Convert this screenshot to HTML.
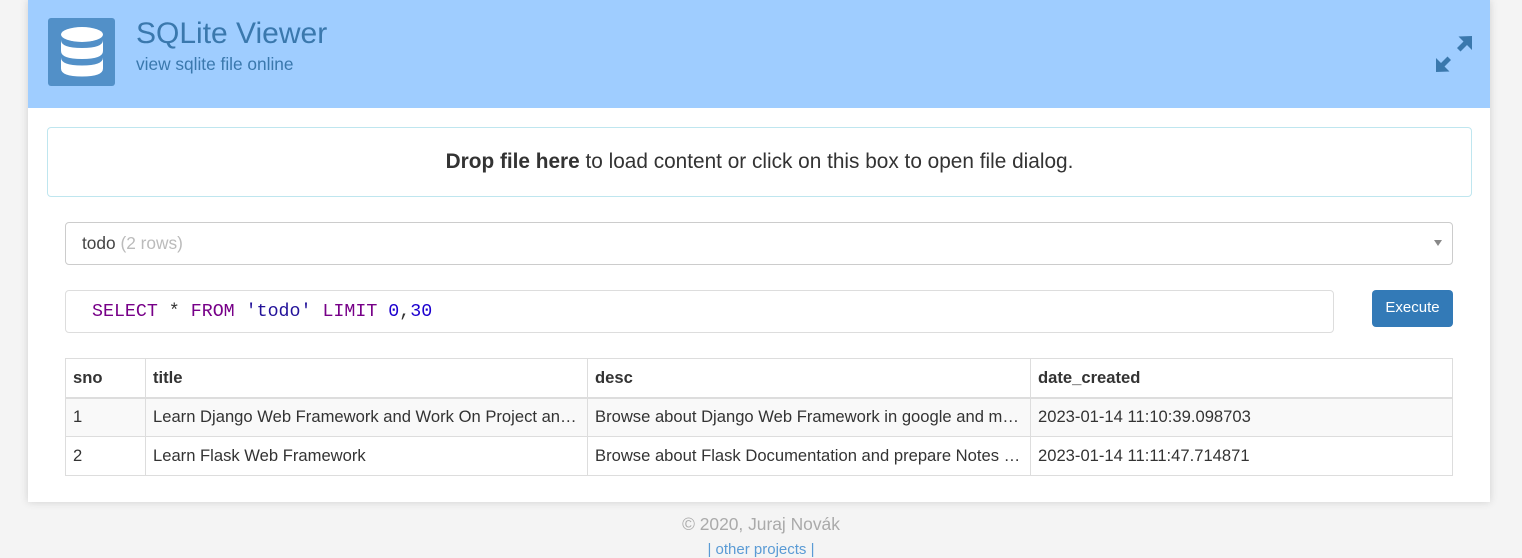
<!DOCTYPE html>
<html><head><meta charset="utf-8"><style>
*{box-sizing:border-box;margin:0;padding:0}
body{width:1522px;height:557px;background:#f4f4f4;font-family:"Liberation Sans",Arial,sans-serif;color:#333;position:relative;overflow:hidden}
.wrap{position:absolute;left:28px;top:0;width:1462px;height:502px;background:#fff;box-shadow:0 0 8px rgba(0,0,0,.15)}
.hdr{position:absolute;left:0;top:0;width:1462px;height:108px;background:#9fcdff}
.logo{position:absolute;left:20px;top:18px;width:67px;height:68px;background:#5290c8;border-radius:3px}
.t1{position:absolute;left:108px;top:17px;font-size:30px;color:#3a78ad}
.t2{position:absolute;left:108px;top:54px;font-size:17.3px;color:#3a78ad}
.drop{position:absolute;left:19px;top:127px;width:1425px;height:70px;border:1px solid #bfe6ef;border-radius:4px;text-align:center;line-height:68px;font-size:20.8px}
.sel{position:absolute;left:37px;top:222px;width:1388px;height:43px;border:1px solid #ccc;border-radius:4px;font-size:17.3px;line-height:41px;padding-left:16px;color:#444}
.sel .c{position:absolute;right:10px;top:17px;border-left:4px solid transparent;border-right:4px solid transparent;border-top:6px solid #888}
.sql{position:absolute;left:37px;top:290px;width:1269px;height:43px;border:1px solid #ddd;border-radius:4px;font-family:"Liberation Mono","DejaVu Sans Mono",monospace;font-size:18.3px;line-height:43px;padding-left:26px;color:#333}
.k{color:#770088}.s{color:#221199}.n{color:#1c00cf}
.btn{position:absolute;left:1344px;top:290px;width:81px;height:37px;background:#337ab7;border-radius:4px;color:#fff;font-size:15px;text-align:center;line-height:36px}
table{position:absolute;left:37px;top:358px;width:1388px;border-collapse:collapse;font-size:16.6px;table-layout:fixed;border:1px solid #ddd}
td,th{border:1px solid #ddd;padding:0 7px;height:39px;text-align:left;white-space:nowrap;overflow:hidden;text-overflow:ellipsis}
th{border-bottom:2px solid #ddd}
tr.o td{background:#f9f9f9}
.f1{position:absolute;left:0;width:1522px;top:514px;text-align:center;color:#aaa;font-size:17.4px}
.f2{position:absolute;left:0;width:1522px;top:541px;text-align:center;color:#5a9bd5;font-size:15px}
</style></head><body>
<div class="wrap">
<div class="hdr">
<div class="logo"><svg width="67" height="68" viewBox="0 0 67 68"><g fill="#fff"><ellipse cx="34" cy="16.5" rx="21" ry="7.5"/><path d="M13 22q0 8 21 8t21-8v11q0 8-21 8t-21-8z"/><path d="M13 39.5q0 8 21 8t21-8v11q0 8-21 8t-21-8z"/></g></svg></div>
<div class="t1">SQLite Viewer</div>
<div class="t2">view sqlite file online</div>
<svg style="position:absolute;left:1408px;top:36px" width="36" height="36" viewBox="0 0 36 36"><g fill="#3a78ad"><path d="M36 0v14l-5-5-6.5 6.5-3.5-3.5 6.5-6.5-5-5z"/><path d="M0 36V22l5 5 6.5-6.5 3.5 3.5-6.5 6.5 5 5z"/></g></svg>
</div>
<div class="drop"><b>Drop file here</b> to load content or click on this box to open file dialog.</div>
<div class="sel">todo <span style="color:#bbb">(2 rows)</span><span class="c"></span></div>
<div class="sql"><span class="k">SELECT</span> * <span class="k">FROM</span> <span class="s">'todo'</span> <span class="k">LIMIT</span> <span class="n">0</span>,<span class="n">30</span></div>
<div class="btn">Execute</div>
<table>
<colgroup><col style="width:80px"><col style="width:442px"><col style="width:443px"><col></colgroup>
<tr><th>sno</th><th>title</th><th>desc</th><th>date_created</th></tr>
<tr class="o"><td>1</td><td>Learn Django Web Framework and Work On Project and more</td><td>Browse about Django Web Framework in google and more</td><td>2023-01-14 11:10:39.098703</td></tr>
<tr><td>2</td><td>Learn Flask Web Framework</td><td>Browse about Flask Documentation and prepare Notes and more</td><td>2023-01-14 11:11:47.714871</td></tr>
</table>
</div>
<div class="f1">© 2020, Juraj Novák</div>
<div class="f2">| other projects |</div>
</body></html>
